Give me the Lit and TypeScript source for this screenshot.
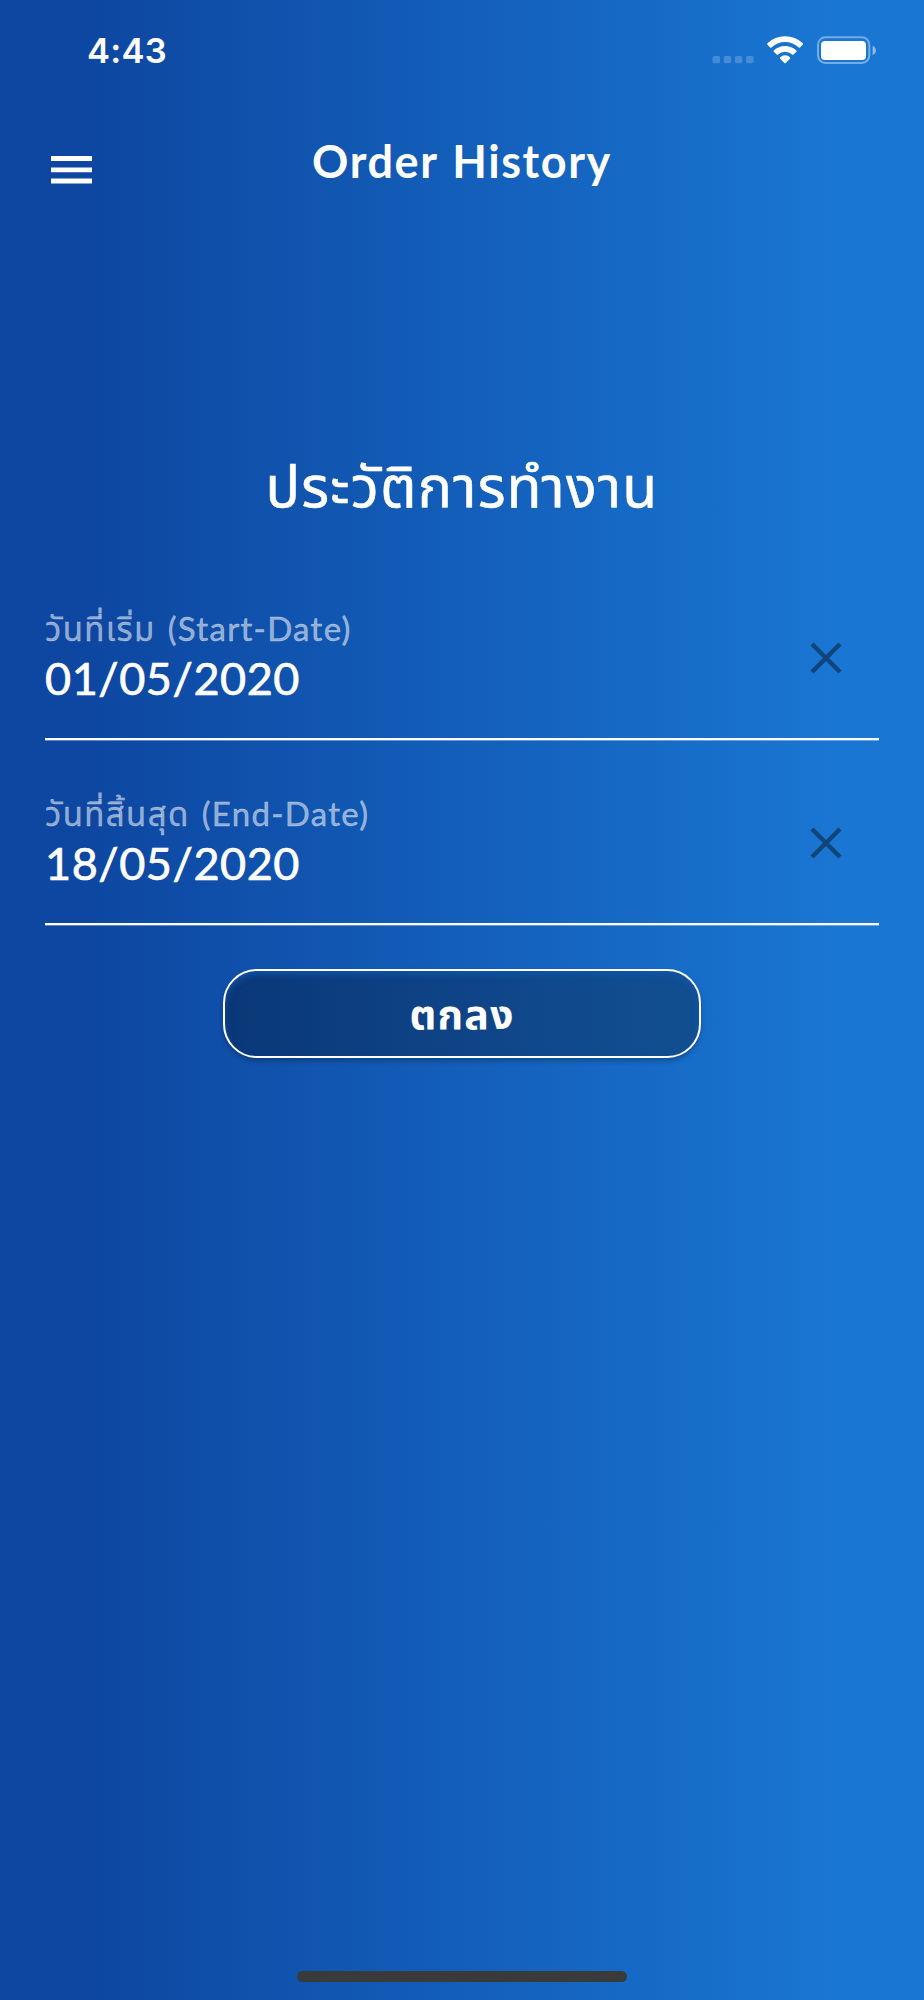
import { LitElement, html, css } from "lit";
import { customElement, property } from "lit/decorators.js";

@customElement("status-bar")
class StatusBar extends LitElement {
  static styles = css`
    :host { display: flex; height: 102px; padding: 0 47px 0 87px; justify-content: space-between; box-sizing: border-box; }
    .time { font: 600 34.5px/40px Inter, sans-serif; padding-top: 30.5px; letter-spacing: 0.3px; }
    .icons { display: block; width: 168px; height: 40px; margin-top: 30px; }
  `;
  render() {
    return html`
      <div class="time">4:43</div>
      <svg class="icons" viewBox="709 30 168 40">
        <g fill="#fff" fill-opacity=".2">
          <rect x="712.5" y="56" width="7.6" height="7.3" rx="2" />
          <rect x="723.7" y="56" width="7.6" height="7.3" rx="2" />
          <rect x="734.8" y="56" width="7.6" height="7.3" rx="2" />
          <rect x="746" y="56" width="7.6" height="7.3" rx="2" />
        </g>
        <g fill="#fff">
          <path d="M767.4 44.6a1 1 0 0 1 0-1.3a25.8 25.8 0 0 1 35.4 0a1 1 0 0 1 0 1.3l-2.7 2.8a1 1 0 0 1-1.3 0a20 20 0 0 0-27.4 0a1 1 0 0 1-1.3 0z" />
          <path d="M773.8 51.8a1 1 0 0 1 0-1.3a16.4 16.4 0 0 1 22.6 0a1 1 0 0 1 0 1.3l-2.9 2.8a1 1 0 0 1-1.3 0a10.3 10.3 0 0 0-14.2 0a1 1 0 0 1-1.3 0z" />
          <path d="M780.2 58.7a1 1 0 0 1 0-1.4a7 7 0 0 1 9.8 0a1 1 0 0 1 0 1.4l-4.2 4.2a1 1 0 0 1-1.4 0z" />
        </g>
        <rect x="818" y="37.2" width="51.3" height="25.7" rx="7.5" fill="none" stroke="#fff" stroke-opacity=".4" stroke-width="2" />
        <rect x="821" y="41" width="45" height="19" rx="4" fill="#fff" />
        <path d="M872.6 45.8q3.3 1.5 3.3 4.6t-3.3 4.6z" fill="#fff" fill-opacity=".5" />
      </svg>
    `;
  }
}

@customElement("date-field")
class DateField extends LitElement {
  @property() label = "";
  @property() hint = "";
  @property() value = "";
  static styles = css`
    :host { display: flex; height: 185px; box-sizing: border-box; border-bottom: 2px solid #fff; box-shadow: 0 1px 0 rgba(255, 255, 255, 0.35); align-items: flex-end; justify-content: space-between; padding: 0 35px 31px 0; }
    .label { display: flex; gap: 12px; font-size: 33px; line-height: 40px; padding-bottom: 1.5px; color: rgba(255, 255, 255, 0.55); white-space: nowrap; }
    .thai { letter-spacing: 1.4px; -webkit-text-stroke: 0.3px; }
    .hint { letter-spacing: 1.3px; -webkit-text-stroke: 0.4px; }
    .value { font: 400 45px/58px Lato, sans-serif; letter-spacing: 0.55px; -webkit-text-stroke: 0.7px #fff; white-space: nowrap; }
    .clear { width: 36px; height: 36px; margin-bottom: 31.5px; }
  `;
  render() {
    return html`
      <div>
        <div class="label"><span class="thai">${this.label}</span><span class="hint">${this.hint}</span></div>
        <div class="value">${this.value}</div>
      </div>
      <svg class="clear" viewBox="0 0 36 36"><path d="M4 4L32 32M32 4L4 32" stroke="#11457a" stroke-width="4.4" /></svg>
    `;
  }
}

@customElement("app-root")
class AppRoot extends LitElement {
  static styles = css`
    :host { display: flex; flex-direction: column; height: 2000px; overflow: hidden; color: #fff;
      font-family: Lato, "Noto Sans Thai", "Noto Sans", sans-serif;
      background: linear-gradient(90deg, #0d47a1 10%, #1976d2 90%); }
    .bar { display: grid; grid-template-columns: 130px 1fr 130px; height: 128px; }
    .menu { width: 41px; height: 28px; margin: 54px 0 0 51px; }
    .title { font: 700 45px/56px Lato, sans-serif; text-align: center; padding-top: 30.5px; letter-spacing: 1.6px; word-spacing: 2px; }
    .heading { text-align: center; font-size: 57px; line-height: 80px; padding-top: 215px; height: 30px; white-space: nowrap; letter-spacing: 1.3px; -webkit-text-stroke: 0.6px #fff; }
    .fields { padding: 80px 45px 0; }
    .ok { align-self: center; box-sizing: border-box; width: 478px; height: 89.5px; margin-top: 43.6px; border: 2.4px solid #fff; border-radius: 34px;
      background: linear-gradient(90deg, #0a3778, #0f478a 60%, #114f91);
      box-shadow: 0 3px 5px rgba(0, 0, 0, 0.25), inset 0 4px 6px rgba(17, 86, 170, 0.8);
      display: flex; align-items: center; justify-content: center; padding-top: 5px; font-size: 41px; font-weight: 700; letter-spacing: 1.2px; }
    .home { width: 330px; height: 11px; border-radius: 6px; background: #3a3a3a; margin: auto auto 18px; }
  `;
  render() {
    return html`
      <status-bar></status-bar>
      <div class="bar">
        <svg class="menu" viewBox="0 0 41 28"><path d="M0 2.5h41M0 13.8h41M0 25h41" stroke="#fff" stroke-width="4.8" /></svg>
        <div class="title">Order History</div>
      </div>
      <div class="heading">ประวัติการทำงาน</div>
      <div class="fields">
        <date-field label="วันที่เริ่ม" hint="(Start-Date)" value="01/05/2020"></date-field>
        <date-field label="วันที่สิ้นสุด" hint="(End-Date)" value="18/05/2020"></date-field>
      </div>
      <div class="ok">ตกลง</div>
      <div class="home"></div>
    `;
  }
}
